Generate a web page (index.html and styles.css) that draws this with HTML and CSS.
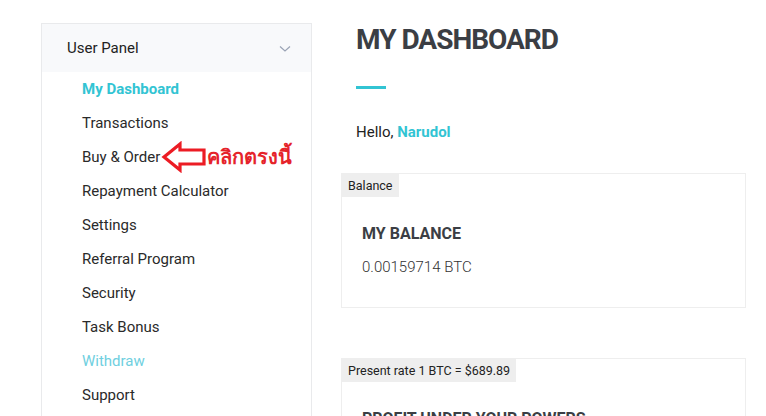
FILE: index.html
```html
<!DOCTYPE html>
<html>

<head>
    <meta charset="utf-8">
    <link rel="stylesheet" href="styles.css">
    <title>My Dashboard</title>
</head>

<body>
    <div class="page">
        <div class="sidebar">
            <div class="panel-head">
                <span>User Panel</span>
                <svg class="chev" width="12" height="8" viewBox="0 0 12 8">
                    <polyline points="1,1.5 6,6 11,1.5" fill="none" stroke="#9aa3b5" stroke-width="1.2"></polyline>
                </svg>
            </div>
            <ul class="menu">
                <li class="active">My Dashboard</li>
                <li>Transactions</li>
                <li class="buy">
                    <span>Buy &amp; Order</span>
                    <span class="note">
                        <svg class="arrow" width="46" height="32" viewBox="0 0 46 32">
                            <path d="M3 16 L19 3 L19 9 L43 9 L43 23 L19 23 L19 29 Z" fill="none" stroke="#ec1c24" stroke-width="3.2" stroke-linejoin="miter"></path>
                        </svg>
                        <span class="click">คลิกตรงนี้</span>
                    </span>
                </li>
                <li>Repayment Calculator</li>
                <li>Settings</li>
                <li>Referral Program</li>
                <li>Security</li>
                <li>Task Bonus</li>
                <li class="soft">Withdraw</li>
                <li>Support</li>
            </ul>
        </div>

        <div class="main">
            <h1>MY DASHBOARD</h1>
            <div class="bar"></div>
            <p class="hello">Hello, <b>Narudol</b></p>

            <div class="card">
                <div class="tag">Balance</div>
                <div class="card-body">
                    <h3>MY BALANCE</h3>
                    <p>0.00159714 BTC</p>
                </div>
            </div>

            <div class="card second">
                <div class="tag">Present rate 1 BTC = $689.89</div>
                <div class="card-body">
                    <h3>PROFIT UNDER YOUR POWERS</h3>
                </div>
            </div>
        </div>
    </div>
</body>

</html>
```

FILE: styles.css
```css
body {
    margin: 0;
    background: #fff;
    font-family: Roboto, "Liberation Sans", sans-serif;
    color: #222;
    height: 416px;
    overflow: hidden;
}

.page {
    display: flex;
    align-items: flex-start;
    padding: 23px 0 0 41px;
    gap: 29px;
}

.sidebar {
    width: 269px;
    border: 1px solid #e9eaec;
    flex-shrink: 0;
}

.panel-head {
    height: 48px;
    background: #f8f9fb;
    display: flex;
    align-items: center;
    justify-content: space-between;
    padding: 0 20px 0 25px;
    font-size: 15px;
    color: #222;
}

.chev {
    margin-top: 1px;
}

.menu {
    list-style: none;
    margin: 0;
    padding: 0 0 20px 40px;
}

.menu li {
    height: 34px;
    line-height: 34px;
    font-size: 15px;
    color: #2a2a2a;
}

.menu li.active {
    color: #32c4d3;
    font-weight: bold;
}

.menu li.soft {
    color: #6fcfe0;
}

.buy {
    display: flex;
    align-items: center;
}

.note {
    display: flex;
    align-items: center;
    margin-left: 1px;
}

.arrow {
    display: block;
}

.click {
    color: #e5232a;
    font-weight: bold;
    font-size: 20px;
}

.main {
    width: 405px;
}

.main h1 {
    margin: 0 0 0 15px;
    font-size: 28px;
    line-height: 34px;
    font-weight: bold;
    color: #3b3e44;
    letter-spacing: -1px;
}

.bar {
    width: 30px;
    height: 3px;
    background: #32c4d3;
    margin: 29px 0 0 15px;
}

.hello {
    margin: 33px 0 0 15px;
    font-size: 15px;
    line-height: 20px;
}

.hello b {
    color: #32c4d3;
}

.card {
    border: 1px solid #eeeeee;
    margin-top: 31px;
    height: 133px;
}

.card.second {
    margin-top: 50px;
}

.tag {
    display: inline-block;
    background: #eeeeee;
    font-size: 12.5px;
    line-height: 23px;
    padding: 0 6px;
    color: #222;
}

.card-body {
    padding: 26px 20px;
}

.card-body h3 {
    margin: 0;
    font-size: 16px;
    line-height: 22px;
    color: #3b3e44;
}

.card-body p {
    margin: 13px 0 0;
    font-size: 15px;
    font-weight: 300;
    color: #333;
}
```
